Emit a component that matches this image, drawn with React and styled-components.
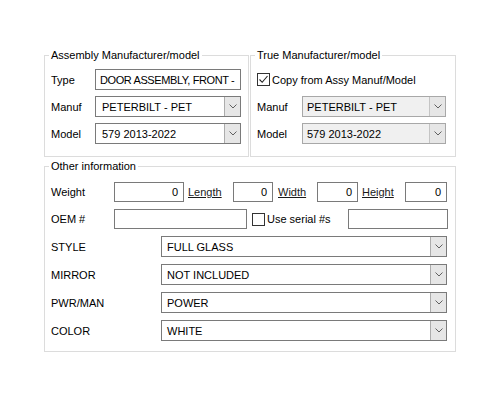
import React from "react";
import styled, { createGlobalStyle } from "styled-components";

const Global = createGlobalStyle`
  html, body { margin: 0; background: #ffffff; }
  body {
    font-family: "Liberation Sans", Arial, sans-serif;
    font-size: 11px;
    color: #000000;
  }
  * { box-sizing: border-box; }
`;

const Page = styled.div`
  padding: 48px 0 0 44px;
  width: 456px;
`;

const TopRow = styled.div`
  display: flex;
  gap: 1px;
`;

const Group = styled.fieldset`
  margin: ${(p) => p.$mt || 0}px 0 0 0;
  padding: ${(p) => p.$pt}px 7px ${(p) => p.$pb}px 6px;
  min-width: 0;
  width: ${(p) => p.$w}px;
  border: 1px solid #dcdcdc;
  display: flex;
  flex-direction: column;
  gap: ${(p) => p.$gap}px;
`;

const Legend = styled.legend`
  padding: 0 2px;
  margin-left: -2px;
  line-height: 14px;
  font-size: 11px;
  color: #000000;
`;

const Row = styled.div`
  display: flex;
  align-items: center;
  height: ${(p) => p.$h || 21}px;
`;

const Label = styled.span`
  width: ${(p) => p.$w}px;
  flex: none;
  white-space: nowrap;
  line-height: 14px;
`;

const LinkLabel = styled.span`
  width: ${(p) => p.$w}px;
  margin-left: ${(p) => p.$ml || 4}px;
  flex: none;
  text-decoration: underline;
  color: #1a1a1a;
  line-height: 14px;
`;

const TextBox = styled.div`
  width: ${(p) => p.$w}px;
  height: 100%;
  flex: none;
  margin-left: ${(p) => (p.$push ? "auto" : `${p.$ml || 0}px`)};
  border: 1px solid #7a7a7a;
  background: #ffffff;
  display: flex;
  align-items: center;
  justify-content: ${(p) => (p.$right ? "flex-end" : "flex-start")};
  padding: 0 ${(p) => (p.$right ? 5 : 2)}px 0 4px;
  letter-spacing: ${(p) => (p.$tight ? "-0.4px" : "normal")};
  white-space: nowrap;
  overflow: hidden;
`;

const Combo = styled.div`
  width: ${(p) => p.$w}px;
  height: 100%;
  flex: none;
  display: flex;
  border: 1px solid ${(p) => (p.$disabled ? "#a8a8a8" : "#7a7a7a")};
  background: ${(p) => (p.$disabled ? "#f0f0f0" : "#ffffff")};
`;

const ComboValue = styled.span`
  flex: 1;
  display: flex;
  align-items: center;
  padding-left: ${(p) => p.$pl || 5}px;
  white-space: nowrap;
  overflow: hidden;
`;

const ComboButton = styled.span`
  width: 16px;
  flex: none;
  display: flex;
  align-items: center;
  justify-content: center;
  background: #e6e6e6;
  border-left: 1px solid ${(p) => (p.$disabled ? "#c4c4c4" : "#acacac")};
`;

const CheckRow = styled.label`
  display: flex;
  align-items: center;
  gap: 2px;
  margin-left: ${(p) => p.$ml || 0}px;
  white-space: nowrap;
`;

const CheckBox = styled.span`
  width: 13px;
  height: 13px;
  flex: none;
  border: 1px solid #333333;
  background: #ffffff;
  display: flex;
  align-items: center;
  justify-content: center;
`;

const Chevron = () => (
  <svg width="8" height="5" viewBox="0 0 8 5">
    <path d="M0.5 0.5 L4 4 L7.5 0.5" fill="none" stroke="#606060" strokeWidth="1" />
  </svg>
);

const Tick = () => (
  <svg width="11" height="11" viewBox="0 0 11 11">
    <path d="M1.5 5.5 L4.2 8.3 L9.5 2" fill="none" stroke="#222222" strokeWidth="1.1" />
  </svg>
);

function Select({ w, value, disabled, pl }) {
  return (
    <Combo $w={w} $disabled={disabled}>
      <ComboValue $pl={pl}>{value}</ComboValue>
      <ComboButton $disabled={disabled}>
        <Chevron />
      </ComboButton>
    </Combo>
  );
}

const attributes = [
  ["STYLE", "FULL GLASS"],
  ["MIRROR", "NOT INCLUDED"],
  ["PWR/MAN", "POWER"],
  ["COLOR", "WHITE"],
];

export default function App() {
  return (
    <>
      <Global />
      <Page>
        <TopRow>
          <Group $w={205} $pt={7} $pb={12} $gap={6}>
            <Legend>Assembly Manufacturer/model</Legend>
            <Row>
              <Label $w={44}>Type</Label>
              <TextBox $w={146} $tight>DOOR ASSEMBLY, FRONT -</TextBox>
            </Row>
            <Row>
              <Label $w={44}>Manuf</Label>
              <Select w={146} value="PETERBILT - PET" pl={6} />
            </Row>
            <Row>
              <Label $w={44}>Model</Label>
              <Select w={146} value="579 2013-2022" pl={6} />
            </Row>
          </Group>
          <Group $w={206} $pt={7} $pb={12} $gap={6}>
            <Legend>True Manufacturer/model</Legend>
            <Row>
              <CheckRow>
                <CheckBox>
                  <Tick />
                </CheckBox>
                Copy from Assy Manuf/Model
              </CheckRow>
            </Row>
            <Row>
              <Label $w={45}>Manuf</Label>
              <Select w={144} value="PETERBILT - PET" disabled pl={4} />
            </Row>
            <Row>
              <Label $w={45}>Model</Label>
              <Select w={144} value="579 2013-2022" disabled pl={4} />
            </Row>
          </Group>
        </TopRow>
        <Group $w={412} $mt={2} $pt={9} $pb={10} $gap={7}>
          <Legend>Other information</Legend>
          <Row $h={20}>
            <Label $w={63}>Weight</Label>
            <TextBox $w={70} $right>0</TextBox>
            <LinkLabel $w={45}>Length</LinkLabel>
            <TextBox $w={40} $right>0</TextBox>
            <LinkLabel $w={39} $ml={5}>Width</LinkLabel>
            <TextBox $w={41} $right>0</TextBox>
            <LinkLabel $w={43}>Height</LinkLabel>
            <TextBox $w={42} $right>0</TextBox>
          </Row>
          <Row $h={20}>
            <Label $w={63}>OEM #</Label>
            <TextBox $w={133} />
            <CheckRow $ml={5}>
              <CheckBox />
              Use serial #s
            </CheckRow>
            <TextBox $w={100} $push />
          </Row>
          {attributes.map(([name, value]) => (
            <Row key={name}>
              <Label $w={110}>{name}</Label>
              <Select w={286} value={value} />
            </Row>
          ))}
        </Group>
      </Page>
    </>
  );
}
